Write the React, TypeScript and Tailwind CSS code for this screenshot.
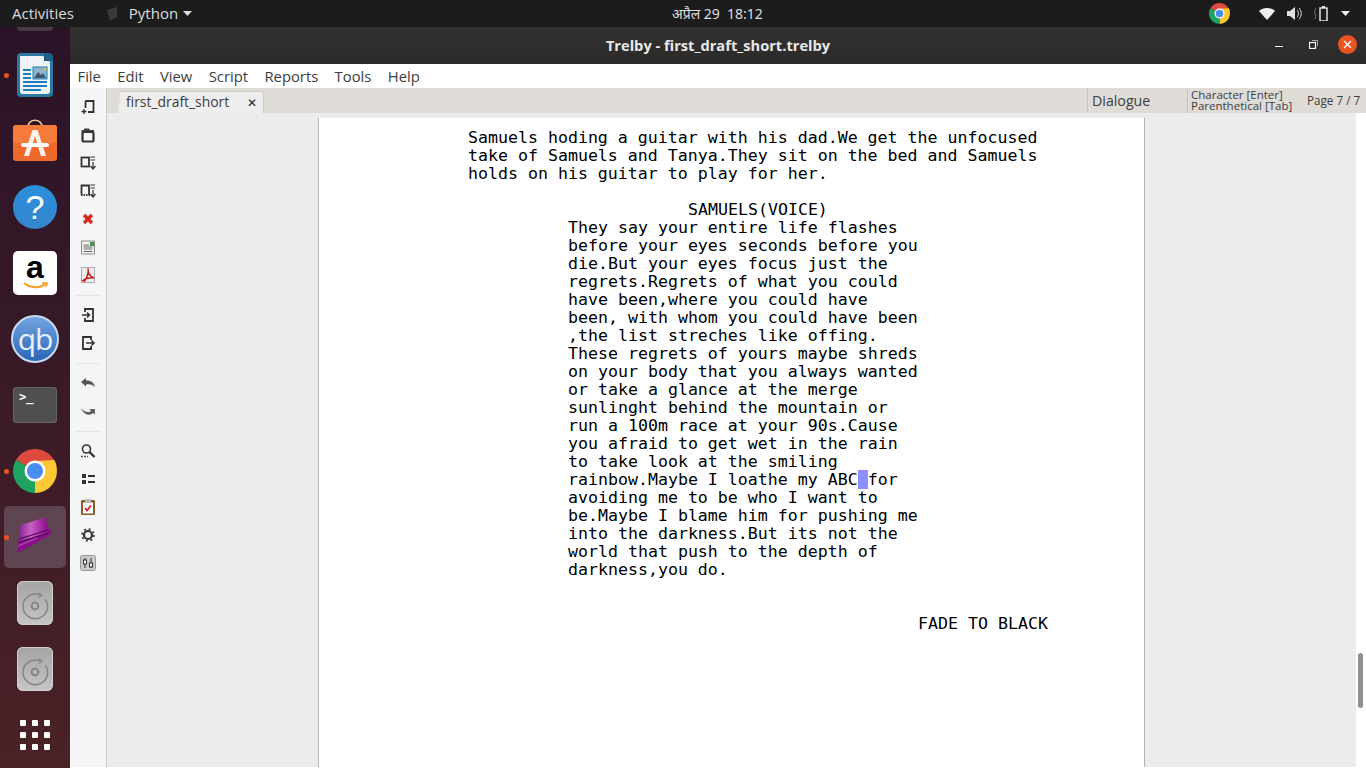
import React from "react";

const UI = "font-['Open_Sans','Noto_Sans',sans-serif]";

const Chrome = ({ size = 44 }: { size?: number }) => (
  <svg width={size} height={size} viewBox="0 0 44 44">
    <path d="M22 22 L3 11 A22 22 0 0 1 41 11 Z" fill="#dd4b3e" />
    <path d="M22 22 L41 11 A22 22 0 0 1 22 44 Z" fill="#fcc934" />
    <path d="M22 22 L22 44 A22 22 0 0 1 3 11 Z" fill="#1ea362" />
    <path d="M22 12 L41 11 A22 22 0 0 1 43.5 17 L32 17 Z" fill="#fcc934" />
    <circle cx="22" cy="22" r="10.5" fill="#fff" />
    <circle cx="22" cy="22" r="8" fill="#4a8cf0" />
  </svg>
);

const Disk = () => (
  <div className="flex h-[44px] w-[36px] items-center justify-center rounded-[6px] bg-gradient-to-b from-[#a4a4a4] to-[#c6c6c6] pt-[6px] shadow-[inset_0_0_0_1px_#cfcfcf]">
    <svg width="28" height="28" viewBox="0 0 28 28" fill="none" stroke="#858585" strokeWidth="1.5">
      <path d="M19 3 A12.3 12.3 0 1 0 24.5 7.5" />
      <path d="M18 0.5 L21 3.5 L17.5 5.5" strokeWidth="1.2" />
      <circle cx="14" cy="14" r="3.4" strokeWidth="2" />
    </svg>
  </div>
);

const Writer = () => (
  <svg width="38" height="46" viewBox="0 0 38 46">
    <path d="M4 1 H28 L37 9 V41 A4 4 0 0 1 33 45 H5 A4 4 0 0 1 1 41 V5 A4 4 0 0 1 4 1 Z" fill="#2b78a5" />
    <path d="M4.5 4 H27 L34 10 V39 A3 3 0 0 1 31 42 H7 A3 3 0 0 1 4 39 V5 Z" fill="#f0f4f6" />
    <path d="M28 1 H33 A4 4 0 0 1 37 5 V9 H28 Z" fill="#1f5f86" />
    <rect x="7" y="17" width="8" height="2" fill="#1b80c0" />
    <rect x="7" y="21" width="8" height="2" fill="#1b80c0" />
    <rect x="7" y="25" width="8" height="2" fill="#1b80c0" />
    <rect x="7" y="29" width="24" height="2" fill="#1b80c0" />
    <rect x="7" y="33" width="24" height="2" fill="#1b80c0" />
    <rect x="7" y="37" width="18" height="2" fill="#1b80c0" />
    <rect x="17" y="15" width="14" height="12" fill="#8fb4cc" stroke="#1b80c0" />
    <path d="M18 26 L22 20 L25 23 L27 21 L30 26 Z" fill="#44576a" />
    <circle cx="29" cy="17" r="1.5" fill="#f0c020" />
  </svg>
);

const Store = () => (
  <svg width="44" height="44" viewBox="0 0 44 44">
    <path d="M15 8 C15 -1 29 -1 29 8" fill="none" stroke="#f6c79d" strokeWidth="1.6" />
    <rect y="6" width="44" height="36" rx="3" fill="#ee6a2c" />
    <rect y="6" width="44" height="18" rx="3" fill="#f47b3a" />
    <path d="M19.5 11 H24.5 L33 37 H28 L22 17 L16 37 H11 Z" fill="#fff" opacity="0.92" />
    <rect x="8" y="24" width="28" height="4" rx="2" fill="#fff" />
  </svg>
);

const Help = () => (
  <div className="relative flex h-[44px] w-[44px] items-center justify-center overflow-hidden rounded-full bg-gradient-to-b from-[#2a8fdc] to-[#3585cc]">
    <span className="font-['Liberation_Sans',sans-serif] text-[34px] leading-none text-white">?</span>
  </div>
);

const Amazon = () => (
  <div className="flex h-[44px] w-[44px] flex-col items-center rounded-[5px] bg-white">
    <span className="mt-[1px] font-['Liberation_Sans',sans-serif] text-[32px] font-bold leading-[30px] text-black">a</span>
    <svg width="26" height="8" viewBox="0 0 26 8" fill="none">
      <path d="M2 1 C8 6 18 7 23 2" stroke="#f39c21" strokeWidth="2" />
      <path d="M20 1 L25 1 L24 5" stroke="#f39c21" strokeWidth="1.5" />
    </svg>
  </div>
);

const Qb = () => (
  <div className="flex h-[48px] w-[48px] items-center justify-center rounded-full border-2 border-[#c9dcf3] bg-gradient-to-b from-[#72a4e0] to-[#2a66b8]">
    <span className="font-['Open_Sans',sans-serif] text-[30px] leading-none tracking-[-1px] text-[#e8f1fb]">qb</span>
  </div>
);

const Terminal = () => (
  <div className="h-[36px] w-[44px] rounded-[4px] bg-[#4f4f4f] pl-[6px] shadow-[inset_0_0_0_1px_#666] font-['DejaVu_Sans_Mono',monospace] text-[12px] font-bold leading-[20px] text-white">
    &gt;_
  </div>
);

const Hat = () => (
  <svg width="40" height="40" viewBox="0 0 40 40">
    <defs>
      <linearGradient id="crown" x1="0" y1="0" x2="1" y2="0">
        <stop offset="0" stopColor="#8b1e8f" />
        <stop offset="0.4" stopColor="#c662c6" />
        <stop offset="0.75" stopColor="#a222a2" />
        <stop offset="1" stopColor="#7a107a" />
      </linearGradient>
    </defs>
    <path d="M5.7 8 L30 0.5 L35 14.7 L3.3 24.7 Z" fill="url(#crown)" />
    <path d="M38.3 11.3 L35 18 L2.3 36.3 L3.3 24.7 L35 14.7 Z" fill="#8a0f88" />
    <path d="M4 22 L33 13" stroke="#4a0a4a" strokeWidth="1.2" />
    <path d="M3.6 25.5 L33 16.5" stroke="#4a0a4a" strokeWidth="1" />
    <path d="M3 29 L22 21" stroke="#c050c0" strokeWidth="1" />
  </svg>
);

const DockItem = ({ children, dot, active }: { children: React.ReactNode; dot?: boolean; active?: boolean }) => (
  <div className="relative flex h-[66px] w-[70px] shrink-0 items-center justify-center">
    {active && <div className="absolute left-[4px] top-[2px] h-[62px] w-[62px] rounded-[5px] bg-[#5f4452]" />}
    {dot && <div className="absolute left-[4px] top-[31px] h-[5px] w-[5px] rounded-full bg-[#e95420]" />}
    <div className="relative">{children}</div>
  </div>
);

const Dock = () => (
  <div className="flex w-[70px] shrink-0 flex-col overflow-hidden bg-gradient-to-b from-[#2a1327] to-[#4a2226] pt-[15px]">
    <div className="absolute left-[17px] top-[27px] h-[4px] w-[36px] rounded-b-[4px] bg-[#4a3a46]" />
    <DockItem dot><Writer /></DockItem>
    <DockItem><Store /></DockItem>
    <DockItem><Help /></DockItem>
    <DockItem><Amazon /></DockItem>
    <DockItem><Qb /></DockItem>
    <DockItem><Terminal /></DockItem>
    <DockItem dot><Chrome /></DockItem>
    <DockItem dot active><Hat /></DockItem>
    <DockItem><Disk /></DockItem>
    <DockItem><Disk /></DockItem>
    <DockItem>
      <div className="grid grid-cols-3 gap-[6px]">
        {[0, 1, 2, 3, 4, 5, 6, 7, 8].map((i) => (
          <div key={i} className="h-[6px] w-[6px] rounded-[1px] bg-white" />
        ))}
      </div>
    </DockItem>
  </div>
);

const stroke = { fill: "none", stroke: "#333", strokeWidth: 1.8 };

const Ico = ({ children }: { children: React.ReactNode }) => (
  <div className="flex h-[28px] w-[36px] items-center justify-center">
    <svg width="16" height="16" viewBox="0 0 16 16">{children}</svg>
  </div>
);
const Sep = ({ h }: { h: string }) => (
  <div className={`flex w-[36px] items-center justify-center ${h}`}>
    <div className="h-px w-[24px] bg-[#e4e5e8]" />
  </div>
);

const Toolbar = () => (
  <div className="flex w-[37px] shrink-0 flex-col border-r border-[#c8c8c8] bg-[#f4f5f7] pt-[5px]">
    <Ico><path d="M5.5 9 V3 Q5.5 2 6.5 2 H13.5 V13 H8" {...stroke} /><path d="M1.5 12.5 H6.5 M4 10 V15" stroke="#333" strokeWidth="1.4" /></Ico>
    <Ico><path d="M4 1.5 H9 L10 3 H14 V5 H1.5 V3 H4 Z" fill="#444" /><rect x="2.5" y="5" width="11" height="9.5" rx="1.5" fill="none" stroke="#333" strokeWidth="2.2" /></Ico>
    <Ico><rect x="1.5" y="2.5" width="7.5" height="9" {...stroke} /><path d="M10.5 2 H15 M10.5 5 H15 M13 7 V13 M10.5 11 L13 14 L15.5 11" fill="none" stroke="#333" strokeWidth="1.2" /></Ico>
    <Ico><path d="M1.5 11.5 V2.5 H9 V11.5" {...stroke} /><path d="M1 12 H10" stroke="#333" strokeWidth="1.8" strokeDasharray="1.5 1" /><path d="M10.5 2 H15 M10.5 5 H15 M13 7 V13 M10.5 11 L13 14 L15.5 11" fill="none" stroke="#333" strokeWidth="1.2" /></Ico>
    <Ico><path d="M4 4 L12 12 M12 4 L4 12" stroke="#d6281f" strokeWidth="3.4" fill="none" /></Ico>
    <Ico><path d="M1.5 2 H14.5 V15 H1.5 Z" fill="#f5f5ef" stroke="#888" /><path d="M3.5 6 H9 M3.5 8 H12.5 M3.5 10 H12.5 M3.5 12.5 H12.5" stroke="#666" /><rect x="10" y="3" width="4" height="4" fill="#3f9a3f" /></Ico>
    <Ico><path d="M1.5 0.5 H14.5 V15.5 H1.5 Z" fill="#efefef" stroke="#aaa" /><path d="M4 15 C8 9 9 5 8 1.5 C8 7 11 10 14 11 C9 10 6 11 2 14" fill="none" stroke="#c8141c" strokeWidth="1.4" /></Ico>
    <Sep h="h-[12px]" />
    <Ico><path d="M5 5 V2 H13 V14 H5 V11" {...stroke} /><path d="M2 8 H9 M7 5.5 L9.5 8 L7 10.5" fill="none" stroke="#333" strokeWidth="1.5" /></Ico>
    <Ico><path d="M11 5 V2 H3 V14 H11 V11" {...stroke} /><path d="M6 8 H14 M11.5 5.5 L14 8 L11.5 10.5" fill="none" stroke="#333" strokeWidth="1.5" /></Ico>
    <Sep h="h-[12px]" />
    <Ico><path d="M1 7 L6 3 V5.5 C10 5 14 7 15 12 C12 9.5 10 9 6 9.5 V11.5 Z" fill="#555" /></Ico>
    <Ico><path d="M1 5 C4 9 9 10 11 8 L9 6 H15 V12 L13 10 C9 14 3 11 1 5 Z" fill="#555" strokeDasharray="1 1" stroke="#f4f5f7" strokeWidth="0.5" /></Ico>
    <Sep h="h-[12px]" />
    <Ico><circle cx="6.5" cy="6" r="4" fill="none" stroke="#333" strokeWidth="1.6" /><path d="M9.5 9 L14.5 14" fill="none" stroke="#333" strokeWidth="2.4" /><path d="M1 13.5 H8" stroke="#555" strokeWidth="1.4" strokeDasharray="2 1" /></Ico>
    <Ico><rect x="2" y="3" width="4" height="4" fill="#333" /><rect x="2" y="9" width="4" height="4" fill="#333" /><path d="M8 5 H15 M8 11 H15" stroke="#333" strokeWidth="2" /></Ico>
    <Ico><rect x="1" y="1" width="14" height="15" rx="1" fill="#8a5a30" /><rect x="3" y="3.5" width="10" height="11" fill="#fff" /><rect x="5" y="0" width="6" height="3" fill="#bbb" /><path d="M5 9 L7 11.5 L11 6.5" fill="none" stroke="#e01b24" strokeWidth="1.8" /></Ico>
    <Ico><circle cx="8" cy="8" r="4" fill="none" stroke="#333" strokeWidth="2.2" /><circle cx="8" cy="8" r="6" fill="none" stroke="#333" strokeWidth="1.6" strokeDasharray="2 2.7" /></Ico>
    <Ico><rect x="0.5" y="0.5" width="15" height="15" rx="2" fill="#c9c9c9" stroke="#999" /><path d="M5 3 V13 M11 3 V13" stroke="#333" /><rect x="3.5" y="5" width="3" height="4" fill="#fff" stroke="#333" /><rect x="9.5" y="8" width="3" height="4" fill="#fff" stroke="#333" /></Ico>
  </div>
);

type L = [number, string];
const lines: L[] = [
  [0, "Samuels hoding a guitar with his dad.We get the unfocused"],
  [0, "take of Samuels and Tanya.They sit on the bed and Samuels"],
  [0, "holds on his guitar to play for her."],
  [0, "\u00a0"],
  [220, "SAMUELS(VOICE)"],
  [100, "They say your entire life flashes"],
  [100, "before your eyes seconds before you"],
  [100, "die.But your eyes focus just the"],
  [100, "regrets.Regrets of what you could"],
  [100, "have been,where you could have"],
  [100, "been, with whom you could have been"],
  [100, ",the list streches like offing."],
  [100, "These regrets of yours maybe shreds"],
  [100, "on your body that you always wanted"],
  [100, "or take a glance at the merge"],
  [100, "sunlinght behind the mountain or"],
  [100, "run a 100m race at your 90s.Cause"],
  [100, "you afraid to get wet in the rain"],
  [100, "to take look at the smiling"],
];

const Script = () => (
  <div className="flex min-h-0 flex-1">
    <div className="flex min-w-0 flex-1 justify-center overflow-hidden bg-[#ececec] pt-[5px]">
      <div className="w-[827px] shrink-0 border-x border-[#b5b5b5] bg-white pl-[149px] pt-[11px] font-['DejaVu_Sans_Mono',monospace] text-[16.6px] leading-[18px] whitespace-pre text-black">
        {lines.map(([m, t], i) => (
          <div key={i} className="h-[18px]" style={{ marginLeft: m }}>{t}</div>
        ))}
        <div className="ml-[100px] h-[18px]">rainbow.Maybe I loathe my ABC<span className="bg-[#8f8fff]"> </span>for</div>
        <div className="ml-[100px] h-[18px]">avoiding me to be who I want to</div>
        <div className="ml-[100px] h-[18px]">be.Maybe I blame him for pushing me</div>
        <div className="ml-[100px] h-[18px]">into the darkness.But its not the</div>
        <div className="ml-[100px] h-[18px]">world that push to the depth of</div>
        <div className="ml-[100px] h-[18px]">darkness,you do.</div>
        <div className="h-[36px]" />
        <div className="ml-[450px] h-[18px]">FADE TO BLACK</div>
      </div>
    </div>
    <div className="flex w-[10px] shrink-0 bg-white pl-[2px] pt-[540px]">
      <div className="h-[55px] w-[5px] rounded-[3px] bg-[#8f8f8f]" />
    </div>
  </div>
);

const Menu = () => (
  <div className={`flex h-[24px] shrink-0 items-center gap-[16.4px] bg-white pl-[7.5px] text-[14.8px] text-[#3d3d3d] ${UI}`}>
    {["File", "Edit", "View", "Script", "Reports", "Tools", "Help"].map((m) => <span key={m}>{m}</span>)}
  </div>
);

const TabBar = () => (
  <div className={`flex h-[25px] shrink-0 bg-[#dfdcd8] text-[#3d3d3d] ${UI}`}>
    <div className="ml-[11px] mt-[3px] flex h-[22px] w-[146px] items-center justify-between rounded-t-[3px] border-r border-t border-[#cfccc8] bg-[#eeeeee] pl-[8px] pr-[6px] text-[13.9px] [clip-path:polygon(3px_0,100%_0,100%_100%,0_100%)]">
      <span>first_draft_short</span>
      <span className="font-['DejaVu_Sans',sans-serif] text-[12px] font-bold text-[#222]">✕</span>
    </div>
    <div className="ml-auto flex">
      <div className="flex w-[100px] items-center border-l border-[#c5c3be] pl-[4px] text-[14.2px]">Dialogue</div>
      <div className="flex w-[120px] flex-col justify-center border-l border-[#c5c3be] pb-[2px] pl-[3px] text-[11.5px] leading-[11px]">
        <div>Character [Enter]</div>
        <div>Parenthetical [Tab]</div>
      </div>
      <div className="flex w-[59px] items-center text-[11.7px]">Page 7 / 7</div>
    </div>
  </div>
);

const Title = () => (
  <div className={`relative flex h-[37px] shrink-0 items-center justify-center bg-gradient-to-b from-[#333230] to-[#2b2a28] text-[14.65px] font-bold text-[#e8e8e8] ${UI}`}>
    <span>Trelby - first_draft_short.trelby</span>
    <div className="absolute right-[9px] top-[8px] flex items-center">
      <div className="mr-[26px] mt-[4px] h-px w-[8px] bg-white" />
      <svg width="9" height="9" viewBox="0 0 9 9" fill="none" stroke="#fff" className="mr-[20px]">
        <rect x="0.5" y="2.5" width="6" height="6" strokeWidth="1.2" /><path d="M3 .5 H8.5 V6" strokeWidth="0.6" />
      </svg>
      <div className="flex h-[19px] w-[19px] items-center justify-center rounded-full bg-[#e95420]">
        <svg width="9" height="9" viewBox="0 0 9 9"><path d="M1 1 L8 8 M8 1 L1 8" stroke="#fff" strokeWidth="1.4" /></svg>
      </div>
    </div>
  </div>
);

const TopBar = () => (
  <div className={`relative flex h-[27px] shrink-0 items-center bg-[#1c1c1c] text-[15px] text-[#dcdcdc] ${UI}`}>
    <span className="ml-[12px]">Activities</span>
    <svg width="11" height="14" viewBox="0 0 11 14" className="ml-[33px]"><path d="M0 3 L10 0 V10 L3 14 Z" fill="#3a3a3a" /></svg>
    <span className="ml-[11px]">Python</span>
    <svg width="9" height="5" viewBox="0 0 9 5" className="ml-[5px]"><path d="M0 0 H9 L4.5 5 Z" fill="#dcdcdc" /></svg>
    <span className="absolute left-[672px] top-[3px] font-['Noto_Sans','Open_Sans',sans-serif] text-[14px]">अप्रैल 29&nbsp; 18:12</span>
    <div className="ml-auto flex items-center">
      <Chrome size={21} />
      <svg width="16" height="12" viewBox="0 0 16 12" className="ml-[29px]"><path d="M0 3 C4 -1 12 -1 16 3 L8 12 Z" fill="#f0f0f0" /></svg>
      <svg width="15" height="13" viewBox="0 0 15 13" fill="none" className="ml-[12px]"><path d="M0 4 H3 L8 0 V13 L3 9 H0 Z" fill="#e0e0e0" /><path d="M10 3 C12 5 12 8 10 10 M12 1 C15 4 15 9 12 12" stroke="#e0e0e0" /></svg>
      <svg width="15" height="15" viewBox="0 0 15 15" fill="none" className="ml-[12px]"><path d="M2 2 L0 8 H2 L1 13" stroke="#666" /><rect x="6" y="2" width="7" height="13" stroke="#f0f0f0" strokeWidth="1.4" /><rect x="8" y="0" width="3" height="2" fill="#f0f0f0" /></svg>
      <svg width="9" height="5" viewBox="0 0 9 5" className="ml-[12px] mr-[16px]"><path d="M0 0 H9 L4.5 5 Z" fill="#f0f0f0" /></svg>
    </div>
  </div>
);

export default function App() {
  return (
    <div className="relative flex h-[768px] w-[1366px] flex-col overflow-hidden bg-white">
      <TopBar />
      <div className="flex min-h-0 flex-1">
        <Dock />
        <div className="flex min-w-0 flex-1 flex-col">
          <Title />
          <Menu />
          <div className="flex min-h-0 flex-1 flex-col">
            <div className="flex min-h-0 flex-1">
              <Toolbar />
              <div className="flex min-w-0 flex-1 flex-col">
                <TabBar />
                <Script />
              </div>
            </div>
            <div className="h-px shrink-0 bg-white" />
          </div>
        </div>
      </div>
    </div>
  );
}
